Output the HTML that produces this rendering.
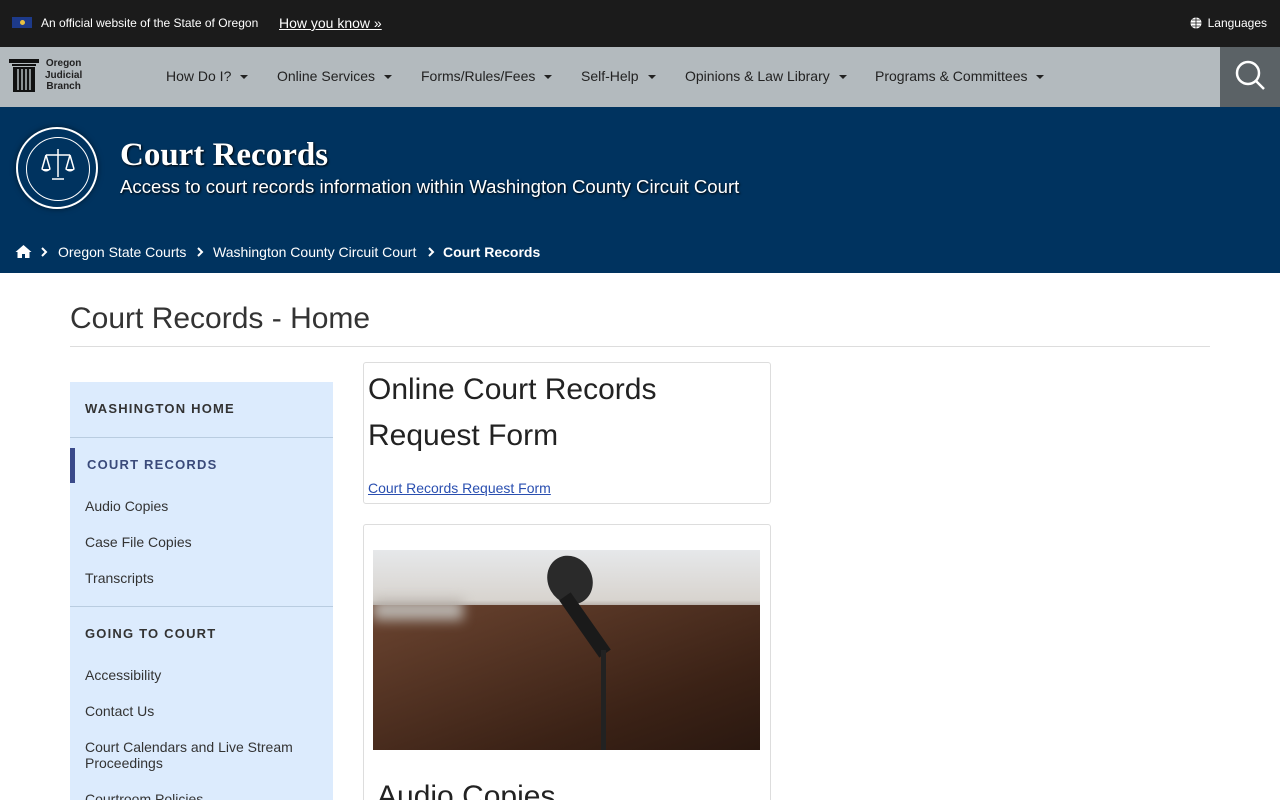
<!DOCTYPE html>
<html><head><meta charset="utf-8"><style>
*{box-sizing:border-box;margin:0;padding:0}
html,body{width:1280px;height:800px;overflow:hidden}
body{font-family:"Liberation Sans",Arial,sans-serif;background:#fff;position:relative}
.top{height:47px;background:#1b1b1b;color:#fff;font-size:12px;position:relative}
.top .flag{position:absolute;left:12px;top:17px;width:20px;height:11px;background:#1d3a8a}
.top .flag:after{content:"";position:absolute;left:8px;top:3px;width:5px;height:5px;background:#e8c040;border-radius:50%}
.top .t1{position:absolute;left:41px;top:16px}
.top .t2{position:absolute;left:279px;top:15px;font-size:14px;text-decoration:underline}
.top .lang{position:absolute;right:13px;top:16px}
.nav{height:60px;background:#b3babe;position:relative}
.nav .item{position:absolute;top:21px;font-size:14px;color:#222}
.nav .item:after{content:"";display:inline-block;margin-left:9px;vertical-align:middle;border-left:4px solid transparent;border-right:4px solid transparent;border-top:4px solid #222}
.srch{position:absolute;right:0;top:0;width:60px;height:60px;background:#5b6266}
.hero{height:166px;background:#00335f;position:relative;color:#fff}
.hero h1{position:absolute;left:120px;top:30px;font-family:"Liberation Serif",serif;font-size:33px;font-weight:bold;text-shadow:1px 1px 2px #000}
.hero .sub{position:absolute;left:120px;top:69px;font-size:18.6px;text-shadow:1px 1px 2px #000}
.seal{position:absolute;left:16px;top:20px;width:82px;height:82px;border-radius:50%;border:2px solid #fff;box-shadow:0 0 6px rgba(0,0,0,.5)}
.seal:after{content:"";position:absolute;left:8px;top:8px;width:62px;height:62px;border-radius:50%;border:1px solid #fff}
.bc{position:absolute;top:137px;font-size:14px}
.chev{position:absolute;top:140px}
.ptitle{position:absolute;left:70px;top:302px;font-size:30px;color:#333}
.hr{position:absolute;left:70px;top:346px;width:1140px;height:1px;background:#ddd}
.side{position:absolute;left:70px;top:382px;width:263px;height:420px;background:#dcebfd}
.side .h{position:absolute;left:15px;font-size:13px;font-weight:bold;letter-spacing:1.2px;color:#333}
.side .l{position:absolute;left:15px;font-size:14px;color:#333}
.side .sep{position:absolute;left:0;width:263px;height:1px;background:#b9cce0}
.card{position:absolute;left:363px;width:408px;border:1px solid #ddd;border-radius:3px;background:#fff}
</style></head><body>
<div class="top"><div class="flag"></div><span class="t1">An official website of the State of Oregon</span><span class="t2">How you know »</span>
<span class="lang"><svg width="12" height="12" viewBox="0 0 12 12" style="vertical-align:-2px;margin-right:6px"><circle cx="6" cy="6" r="5.5" fill="#fff"/><path d="M0.5 6h11M6 .5v11M2 3h8M2 9h8" stroke="#1b1b1b" stroke-width=".8" fill="none"/></svg>Languages</span></div>
<div class="nav">
<svg style="position:absolute;left:9px;top:12px" width="30" height="33" viewBox="0 0 30 33"><rect x="0" y="0" width="30" height="4" fill="#111"/><rect x="3" y="5" width="24" height="2" fill="#111"/><rect x="4" y="8" width="22" height="25" fill="#111"/><path d="M9 10v21M13 10v21M17 10v21M21 10v21" stroke="#b3babe" stroke-width="1.5"/></svg>
<div style="position:absolute;left:45px;top:11px;font-size:10px;font-weight:bold;line-height:11.5px;text-align:center;color:#222">Oregon<br>Judicial<br>Branch</div>
<span class="item" style="left:166px">How Do I?</span>
<span class="item" style="left:277px">Online Services</span>
<span class="item" style="left:421px">Forms/Rules/Fees</span>
<span class="item" style="left:581px">Self-Help</span>
<span class="item" style="left:685px">Opinions &amp; Law Library</span>
<span class="item" style="left:875px">Programs &amp; Committees</span>
<div class="srch"><svg width="60" height="60" viewBox="0 0 60 60"><circle cx="28" cy="26" r="11" stroke="#fff" stroke-width="2.5" fill="none"/><path d="M36 34l8 8" stroke="#fff" stroke-width="2.5"/></svg></div>
</div>
<div class="hero"><div class="seal"></div>
<svg style="position:absolute;left:40px;top:40px" width="36" height="36" viewBox="0 0 36 36"><path d="M18 2v28M6 8h24M6 8l-4 14M6 8l4 14M30 8l-4 14M30 8l4 14M12 32h12" stroke="#fff" stroke-width="1.5" fill="none"/><path d="M1 22h10q-5 5-10 0M25 22h10q-5 5-10 0" fill="#fff"/></svg>
<h1>Court Records</h1><div class="sub">Access to court records information within Washington County Circuit Court</div>
<svg style="position:absolute;left:15px;top:137px" width="17" height="14" viewBox="0 0 17 14"><path d="M8.5 1L0.5 8h2v6h4.5v-4h3v4h4.5V8h2z" fill="#fff"/></svg>
<svg class="chev" style="left:40px" width="8" height="10" viewBox="0 0 8 10"><path d="M2 1l4 4-4 4" stroke="#fff" stroke-width="2" fill="none"/></svg>
<span class="bc" style="left:58px">Oregon State Courts</span>
<svg class="chev" style="left:196px" width="8" height="10" viewBox="0 0 8 10"><path d="M2 1l4 4-4 4" stroke="#fff" stroke-width="2" fill="none"/></svg>
<span class="bc" style="left:213px">Washington County Circuit Court</span>
<svg class="chev" style="left:427px" width="8" height="10" viewBox="0 0 8 10"><path d="M2 1l4 4-4 4" stroke="#fff" stroke-width="2" fill="none"/></svg>
<span class="bc" style="left:443px;font-weight:bold">Court Records</span>
</div>
<div class="ptitle">Court Records - Home</div><div class="hr"></div>
<div class="side">
<div class="h" style="top:19px">WASHINGTON HOME</div><div class="sep" style="top:55px"></div>
<div style="position:absolute;left:0;top:66px;width:5px;height:35px;background:#3a4a8a"></div>
<div class="h" style="top:75px;left:17px;color:#3a4a7a">COURT RECORDS</div>
<div class="l" style="top:116px">Audio Copies</div><div class="l" style="top:152px">Case File Copies</div><div class="l" style="top:188px">Transcripts</div>
<div class="sep" style="top:224px"></div>
<div class="h" style="top:244px">GOING TO COURT</div>
<div class="l" style="top:285px">Accessibility</div><div class="l" style="top:321px">Contact Us</div>
<div class="l" style="top:357px;line-height:16px">Court Calendars and Live Stream<br>Proceedings</div>
<div class="l" style="top:409px">Courtroom Policies</div>
</div>
<div class="card" style="top:362px;height:142px">
<div style="position:absolute;left:4px;top:4px;font-size:30px;line-height:46px;color:#222">Online Court Records<br>Request Form</div>
<a style="position:absolute;left:4px;top:117px;font-size:14px;color:#2a4fb0;text-decoration:underline">Court Records Request Form</a></div>
<div class="card" style="top:524px;height:300px">
<div style="position:absolute;left:9px;top:25px;width:387px;height:200px;overflow:hidden;background:linear-gradient(180deg,#e6e8ea 0%,#d8d4cf 25%,#9b8f88 30%,#5a3a28 45%,#3a2418 100%)">
<div style="position:absolute;left:0;top:55px;width:387px;height:145px;background:linear-gradient(160deg,#6b4430,#3b2216 70%,#2a1810)"></div>
<div style="position:absolute;left:0;top:50px;width:90px;height:20px;background:#b8b2ac;filter:blur(6px)"></div>
<div style="position:absolute;left:175px;top:5px;width:44px;height:50px;border-radius:50%;background:#2a2a2a;transform:rotate(-30deg)"></div>
<div style="position:absolute;left:205px;top:40px;width:14px;height:70px;background:#1a1a1a;transform:rotate(-35deg)"></div>
<div style="position:absolute;left:228px;top:100px;width:5px;height:100px;background:#222"></div>
</div>
<div style="position:absolute;left:13px;top:255px;font-size:30px;color:#222">Audio Copies</div></div>
</body></html>
